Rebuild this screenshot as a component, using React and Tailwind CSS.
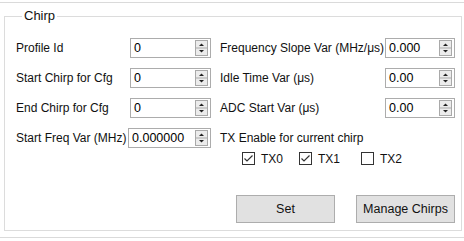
import React from "react";

function Spin() {
  return (
    <svg width="13" height="16" viewBox="0 0 13 16" className="shrink-0">
      <rect x="0.5" y="0.5" width="12" height="15" fill="#ececec" stroke="#a9a9a9" />
      <line x1="1" y1="8" x2="12" y2="8" stroke="#a9a9a9" />
      <path d="M4 6 L6.5 3.5 L9 6 Z" fill="#222" />
      <path d="M4 10 L6.5 12.5 L9 10 Z" fill="#222" />
    </svg>
  );
}

function SpinBox({ value, w }) {
  return (
    <div className={`${w} h-[20px] border border-[#acacac] bg-white flex items-center justify-between pl-[3px] pr-[2px] shrink-0`}>
      <span className="text-[12.5px] leading-none text-black">{value}</span>
      <Spin />
    </div>
  );
}

function Check({ checked, label }) {
  return (
    <div className="flex items-center gap-[6px]">
      <div className="w-[13px] h-[13px] border border-[#333] bg-white flex items-center justify-center">
        {checked && (
          <svg width="11" height="11" viewBox="0 0 11 11">
            <path d="M1.5 5.5 L4 8 L9.5 2.5" fill="none" stroke="#333" strokeWidth="1.2" />
          </svg>
        )}
      </div>
      <span>{label}</span>
    </div>
  );
}

function Row({ l, lw, lv, lbw, r, rv }) {
  return (
    <div className="flex items-center h-[20px]">
      <div className="flex items-center w-[204px]">
        <span className={`${lw} shrink-0 whitespace-nowrap`}>{l}</span>
        <SpinBox value={lv} w={lbw} />
      </div>
      <div className="flex items-center">
        <span className="w-[165px] shrink-0 whitespace-nowrap">{r}</span>
        {rv !== undefined && <SpinBox value={rv} w="w-[70px]" />}
      </div>
    </div>
  );
}

export default function App() {
  return (
    <div className="w-[464px] h-[241px] bg-white pt-[2px] font-['Liberation_Sans',Arial,sans-serif] text-[12px] text-[#111]">
      <div className="h-[236px] border-t border-b border-[#dadada] px-[4px] pt-[6px]">
        <fieldset className="border border-[#dcdcdc] h-[222px] w-[458px] pl-[11px] pt-[15px]">
          <legend className="ml-[6px] px-[2px] leading-[14px] text-[13px]">Chirp</legend>
          <div className="flex flex-col gap-[10px]">
            <Row l="Profile Id" lw="w-[114px]" lv="0" lbw="w-[81px]" r="Frequency Slope Var (MHz/μs)" rv="0.000" />
            <Row l="Start Chirp for Cfg" lw="w-[114px]" lv="0" lbw="w-[81px]" r="Idle Time Var (μs)" rv="0.00" />
            <Row l="End Chirp for Cfg" lw="w-[114px]" lv="0" lbw="w-[81px]" r="ADC Start Var (μs)" rv="0.00" />
            <Row l="Start Freq Var (MHz)" lw="w-[112px]" lv="0.000000" lbw="w-[83px]" r="TX Enable for current chirp" />
          </div>
          <div className="ml-[226px] mt-[4px] flex items-center h-[13px]">
            <div className="w-[57px]"><Check checked label="TX0" /></div>
            <div className="w-[62px]"><Check checked label="TX1" /></div>
            <div><Check checked={false} label="TX2" /></div>
          </div>
          <div className="ml-[220px] mt-[30px] flex gap-[21px]">
            <button className="w-[99px] h-[28px] bg-[#e1e1e1] border border-[#adadad] text-[12.5px]">Set</button>
            <button className="w-[99px] h-[28px] bg-[#e1e1e1] border border-[#adadad] text-[12.5px]">Manage Chirps</button>
          </div>
        </fieldset>
      </div>
    </div>
  );
}
